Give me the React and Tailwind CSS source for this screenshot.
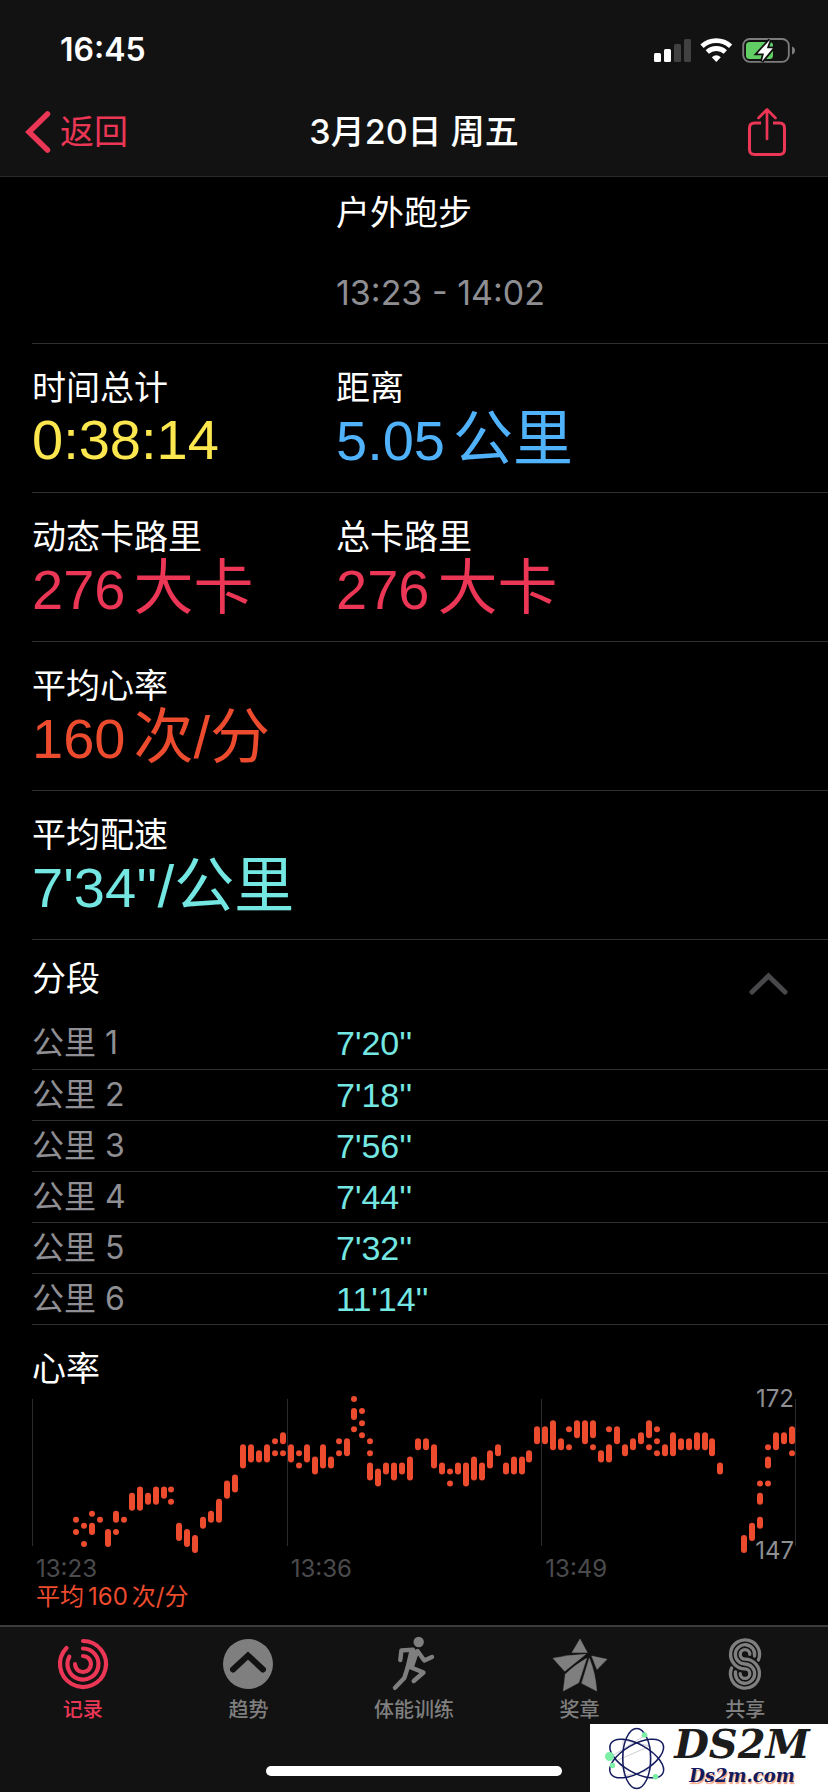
import React, { useState } from "react";
import clsx from "clsx";

const stats = [
  [
    { label: "时间总计", value: "0:38:14", color: "text-[#fde74f]" },
    { label: "距离", value: "5.05", unit: "公里", color: "text-[#4fb2fb]" },
  ],
  [
    { label: "动态卡路里", value: "276", unit: "大卡", color: "text-[#eb3656]" },
    { label: "总卡路里", value: "276", unit: "大卡", color: "text-[#eb3656]" },
  ],
  [{ label: "平均心率", value: "160", unit: "次/分", color: "text-[#ec4b2e]" }],
  [{ label: "平均配速", value: "7'34''", unit: "/公里", tight: true, color: "text-[#74e7e3]" }],
];

const splits = ["7'20''", "7'18''", "7'56''", "7'44''", "7'32''", "11'14''"];

// one entry per time slot, each a list of [high, low] bpm ranges
const heartRate = [
  [[152, 152], [150, 150]],
  [[151, 151], [148, 148]],
  [[153, 153], [151, 150]],
  [[152, 152]],
  [[150, 148]],
  [[153, 152], [150, 150]],
  [[152, 152]],
  [[156, 154]],
  [[157, 154]],
  [[156, 155]],
  [[157, 155]],
  [[157, 156]],
  [[157, 157], [155, 155]],
  [[151, 149]],
  [[150, 148]],
  [[149, 147]],
  [[152, 151]],
  [[153, 152]],
  [[155, 152]],
  [[158, 156]],
  [[159, 157]],
  [[164, 161]],
  [[164, 162]],
  [[163, 162]],
  [[164, 162]],
  [[165, 165], [163, 163]],
  [[166, 165], [163, 163]],
  [[164, 162]],
  [[163, 163], [161, 161]],
  [[164, 162]],
  [[162, 160]],
  [[164, 161]],
  [[162, 161]],
  [[165, 165], [163, 163]],
  [[165, 163]],
  [[172, 172], [170, 169], [167, 167]],
  [[170, 170], [168, 168], [166, 166]],
  [[165, 165], [163, 163], [161, 159]],
  [[160, 158]],
  [[161, 160]],
  [[161, 159]],
  [[161, 160]],
  [[162, 159]],
  [[165, 164]],
  [[165, 164]],
  [[164, 161]],
  [[161, 160]],
  [[160, 160], [158, 158]],
  [[161, 160]],
  [[161, 158]],
  [[162, 159]],
  [[161, 159]],
  [[163, 161]],
  [[164, 163]],
  [[161, 160]],
  [[162, 160]],
  [[162, 160]],
  [[163, 162]],
  [[167, 165]],
  [[167, 165]],
  [[168, 164]],
  [[165, 164]],
  [[167, 167], [164, 164]],
  [[168, 166]],
  [[168, 165]],
  [[168, 166], [164, 164]],
  [[163, 162]],
  [[167, 167], [164, 162]],
  [[167, 165]],
  [[164, 163]],
  [[165, 164]],
  [[166, 165]],
  [[168, 166], [164, 164]],
  [[167, 167], [165, 165], [163, 163]],
  [[164, 163]],
  [[166, 163]],
  [[165, 164]],
  [[165, 164]],
  [[166, 164]],
  [[166, 164]],
  [[165, 163]],
  [[161, 160]],
  [],
  [],
  [[149, 147]],
  [[151, 149]],
  [[158, 158], [156, 155], [152, 151]],
  [[164, 164], [162, 161], [158, 158]],
  [[166, 164]],
  [[166, 165]],
  [[167, 165], [163, 163]],
];

function StatusIcons() {
  return (
    <svg viewBox="0 0 142 27" className="h-[27px] w-[142px]" aria-hidden="true">
      <rect x="0" y="16" width="7" height="9" rx="1.5" fill="#fff" />
      <rect x="10" y="12" width="7" height="13" rx="1.5" fill="#fff" />
      <rect x="20" y="7" width="7" height="18" rx="1.5" fill="#414141" />
      <rect x="30" y="2" width="7" height="23" rx="1.5" fill="#414141" />
      <g fill="none" stroke="#fff" strokeWidth="4.8">
        <path d="M48 9.3A21 21 0 0 1 76.600 9.300" />
        <path d="M53.300 15A13.300 13.300 0 0 1 71.300 15" />
      </g>
      <path d="M62.300 25L57.800 20.300Q62.300 16.300 66.800 20.300Z" fill="#fff" />
      <rect x="89.200" y="2" width="45.600" height="22.800" rx="6.500" fill="none" stroke="#7c7c7c" strokeWidth="1.800" />
      <rect x="92" y="5" width="27" height="17" rx="3.500" fill="#62cf65" />
      <path d="M138 9.500Q141 10.500 141 13.500T138 17.500Z" fill="#7c7c7c" />
      <path
        d="M115.800 3L103.500 16.500H110L107.800 24.500L118.800 11.300H112.800Z"
        fill="#fff"
        stroke="#121212"
        strokeWidth="3.600"
        paintOrder="stroke"
      />
    </svg>
  );
}

function ShareIcon() {
  return (
    <svg viewBox="0 0 42 52" className="h-[52px] w-[42px]" fill="none" stroke="currentColor" strokeWidth="3" aria-hidden="true">
      <path d="M15 17H8.500Q3.500 17 3.500 22V43.500Q3.500 48.500 8.500 48.500H33.500Q38.500 48.500 38.500 43.500V22Q38.500 17 33.500 17H27" />
      <path d="M21 4V33M12.500 12L21 3.500L29.500 12" strokeWidth="2.700" strokeLinecap="round" strokeLinejoin="round" />
    </svg>
  );
}

function RingsIcon() {
  return (
    <svg viewBox="0 0 56 56" className="size-14" fill="none" stroke="currentColor" strokeWidth="4.200" strokeLinecap="round" aria-hidden="true">
      <path d="M28 5A23 23 0 1 1 11.500 12" />
      <path d="M28 12.500A15.500 15.500 0 1 1 14.300 20.700" />
      <path d="M28 20A8 8 0 1 1 20 28" />
    </svg>
  );
}

function TrendIcon() {
  return (
    <svg viewBox="0 0 56 56" className="size-14" aria-hidden="true">
      <circle cx="28" cy="28" r="25" fill="currentColor" />
      <path d="M13 33.500L28 19.500L43 33.500" fill="none" stroke="#121212" strokeWidth="6" strokeLinecap="round" />
    </svg>
  );
}

function RunnerIcon() {
  return (
    <svg viewBox="0 0 56 56" className="size-14" fill="none" stroke="currentColor" strokeWidth="4.400" strokeLinecap="round" strokeLinejoin="round" aria-hidden="true">
      <circle cx="32.700" cy="6" r="5.200" fill="currentColor" stroke="none" />
      <path d="M14.300 24L15.400 14.400L27 13.700" />
      <path d="M31.500 15L38.300 24.500L46 21" />
      <path d="M24 31L37.500 36.500L27.700 45" />
      <path d="M21.500 32L18.300 42L9 51.800" />
      <path d="M25 14L31.500 16L26.500 31L20.800 32Z" fill="currentColor" strokeWidth="3" />
    </svg>
  );
}

function StarIcon() {
  return (
    <svg viewBox="0 0 56 56" className="size-14" fill="currentColor" stroke="currentColor" strokeWidth="0.500" strokeLinejoin="round" aria-hidden="true">
      <path d="M28 3L35.300 16.600L20 16.600Z" />
      <path d="M1 22.300Q17 19 33.700 18.300L12.700 35.300Z" />
      <path d="M34.700 22.300Q22 29.500 13.300 38.300L11.300 55L26.700 46.700Z" />
      <path d="M37.300 22.300L29.700 47.300L44.700 55Q43.500 37 37.300 22.300Z" />
      <path d="M39.700 20L55 23.300L45 33.500Z" />
    </svg>
  );
}

function SharingIcon() {
  return (
    <svg viewBox="0 0 56 56" className="size-14" fill="none" stroke="currentColor" strokeWidth="3.300" strokeLinecap="round" aria-hidden="true">
      <path d="M41.400 24A14.500 14.500 0 1 0 28 32.850A4.800 4.800 0 1 1 23.200 37.650" />
      <path d="M37.500 20A9.650 9.650 0 1 0 28 28A9.650 9.650 0 1 1 18.500 36" />
      <path d="M32.800 18.350A4.800 4.800 0 1 0 28 23.150A14.500 14.500 0 1 1 14.600 32" />
    </svg>
  );
}

const tabs = [
  { label: "记录", icon: RingsIcon, active: true },
  { label: "趋势", icon: TrendIcon },
  { label: "体能训练", icon: RunnerIcon },
  { label: "奖章", icon: StarIcon },
  { label: "共享", icon: SharingIcon },
];

function Header() {
  return (
    <header className="border-b border-[#2a2a2b] bg-[#121212]">
      <div className="flex h-22 items-center justify-between pt-3 pr-8 pl-15">
        <span className="text-[32px] leading-10 font-semibold">16:45</span>
        <StatusIcons />
      </div>
      <div className="grid h-22 grid-cols-[1fr_auto_1fr] items-center px-6">
        <button type="button" className="flex items-center gap-2 justify-self-start text-[34px] leading-10 text-[#eb3656]">
          <svg viewBox="0 0 28 44" className="h-11 w-7" fill="none" stroke="currentColor" strokeWidth="5.500" strokeLinecap="round" aria-hidden="true">
            <path d="M23.500 4L5 22L23.500 40" />
          </svg>
          返回
        </button>
        <h1 className="text-[34px] leading-10 font-medium">3月20日 周五</h1>
        <button type="button" aria-label="共享体能训练" className="justify-self-end pr-4 text-[#eb3656]">
          <ShareIcon />
        </button>
      </div>
    </header>
  );
}

function Stat({ label, value, unit, tight, color }) {
  return (
    <div>
      <h2 className="text-[34px] leading-10">{label}</h2>
      <p
        className={clsx(
          "flex h-16 items-baseline font-['Liberation_Sans','Noto_Sans_CJK_SC',sans-serif] text-[56px] leading-16",
          !tight && "gap-2",
          color
        )}
      >
        <span>{value}</span>
        {unit && <span className="text-[60px] leading-16">{unit}</span>}
      </p>
    </div>
  );
}

function Splits() {
  const [open, setOpen] = useState(true);

  return (
    <section className="ml-8">
      <button
        type="button"
        aria-expanded={open}
        onClick={() => setOpen(!open)}
        className="flex h-[78px] w-full items-center justify-between pr-10 text-[34px] leading-10"
      >
        分段
        <svg viewBox="0 0 40 36" className={clsx("h-9 w-10", !open && "rotate-180")} fill="none" stroke="#48484a" strokeWidth="5" strokeLinecap="round" aria-hidden="true">
          <path d="M4 31L20.500 15L37 31" />
        </svg>
      </button>
      {open && (
        <table className="w-full table-fixed text-[32px] leading-10">
          <tbody>
            {splits.map((pace, i) => (
              <tr key={i} className="h-[51px] border-b border-[#303032]">
                <th scope="row" className="w-[304px] text-left font-normal text-[#8e8e93]">
                  公里 {i + 1}
                </th>
                <td className="font-['Liberation_Sans',sans-serif] text-[34px] text-[#74e7e3]">{pace}</td>
              </tr>
            ))}
          </tbody>
        </table>
      )}
    </section>
  );
}

function HeartRateChart() {
  return (
    <section className="px-8 pt-6 pb-3">
      <h2 className="text-[34px] leading-10">心率</h2>
      <div className="relative">
        <svg viewBox="0 0 764 166" className="block w-full" role="img" aria-label="心率">
          {[0.5, 255.5, 509.5, 763.5].map((x) => (
            <line key={x} x1={x} x2={x} y1="10" y2="157" stroke="#2c2c2e" />
          ))}
          {heartRate.map((ranges, i) =>
            ranges.map(([high, low]) => (
              <rect
                key={`${i}-${high}`}
                x={41 + Math.round(i * 7.956)}
                y={7 + (172 - high) * 6.04}
                width="6"
                height={6 + (high - low) * 6.04}
                rx="3"
                fill="#ec4b2e"
              />
            ))
          )}
        </svg>
        <span className="absolute -top-1 right-0.5 text-2xl leading-7 text-[#8e8e93]">172</span>
        <span className="absolute right-0.5 -bottom-2.5 text-2xl leading-7 text-[#8e8e93]">147</span>
      </div>
      <div className="grid grid-cols-3 text-2xl leading-7 text-[#4b4b4d]">
        <span className="pl-1">13:23</span>
        <span className="pl-1">13:36</span>
        <span className="pl-1">13:49</span>
      </div>
      <p className="pl-1 text-2xl leading-7 text-[#ec4b2e]">
        平均<span className="mx-1">160</span>次/分
      </p>
    </section>
  );
}

function TabBar() {
  return (
    <footer className="mt-auto border-t-2 border-[#3c3c3d] bg-[#121212] pt-[9px] pb-4">
      <nav className="grid grid-cols-5">
        {tabs.map(({ label, icon: Icon, active }) => (
          <button
            key={label}
            type="button"
            className={clsx(
              "flex flex-col items-center gap-1.5 text-xl leading-6 font-medium",
              active ? "text-[#eb3656]" : "text-[#7f7f7f]"
            )}
          >
            <Icon />
            {label}
          </button>
        ))}
      </nav>
      <div className="mx-auto mt-11 h-2.5 w-[296px] rounded-full bg-white" />
    </footer>
  );
}

function Watermark() {
  return (
    <div className="absolute right-0 bottom-0 flex h-[68px] w-[238px] items-center bg-white">
      <svg viewBox="0 0 78 68" className="h-[68px] w-[78px] shrink-0" fill="none" aria-hidden="true">
        <path d="M33 16L60 22V46L34 52ZM22 32L54 12M24 34L36 48M60 22L28 36" stroke="#b5b5bf" strokeWidth="0.700" />
        <g stroke="#131a5e" strokeWidth="1.500">
          <ellipse cx="46.700" cy="34.500" rx="14" ry="30" />
          <ellipse cx="46.700" cy="34.500" rx="14" ry="30" transform="rotate(60 46.700 34.500)" />
          <ellipse cx="46.700" cy="34.500" rx="14" ry="30" transform="rotate(-60 46.700 34.500)" />
        </g>
        <g fill="#7befa6">
          <circle cx="19.500" cy="32.500" r="4.500" />
          <circle cx="22.500" cy="41.500" r="2.700" />
          <circle cx="54.500" cy="11" r="2.800" />
          <circle cx="65.500" cy="52.700" r="2.800" />
        </g>
      </svg>
      <div className="flex flex-1 flex-col items-center pr-3 font-['DejaVu_Serif',serif] font-bold italic">
        <span className="text-[40px] leading-9 text-[#1c1c1c]">DS2M</span>
        <span className="text-lg leading-7 text-[#131a5e] [text-shadow:1px_2px_1px_#f5a283]">Ds2m.com</span>
      </div>
    </div>
  );
}

export default function App() {
  return (
    <div className="relative flex min-h-screen flex-col bg-black font-[Inter,'Noto_Sans_CJK_SC',sans-serif] text-white" lang="zh-CN">
      <Header />
      <main>
        <div className="ml-8 flex flex-col gap-10 border-b border-[#303032] pt-4 pb-[30px] pl-[304px] text-[34px] leading-10">
          <p>户外跑步</p>
          <p className="text-[#8e8e93]">13:23 - 14:02</p>
        </div>
        {stats.map((row) => (
          <div key={row[0].label} className="ml-8 grid grid-cols-[304px_1fr] border-b border-[#303032] pt-6 pb-5">
            {row.map((stat) => (
              <Stat key={stat.label} {...stat} />
            ))}
          </div>
        ))}
        <Splits />
        <HeartRateChart />
      </main>
      <TabBar />
      <Watermark />
    </div>
  );
}
